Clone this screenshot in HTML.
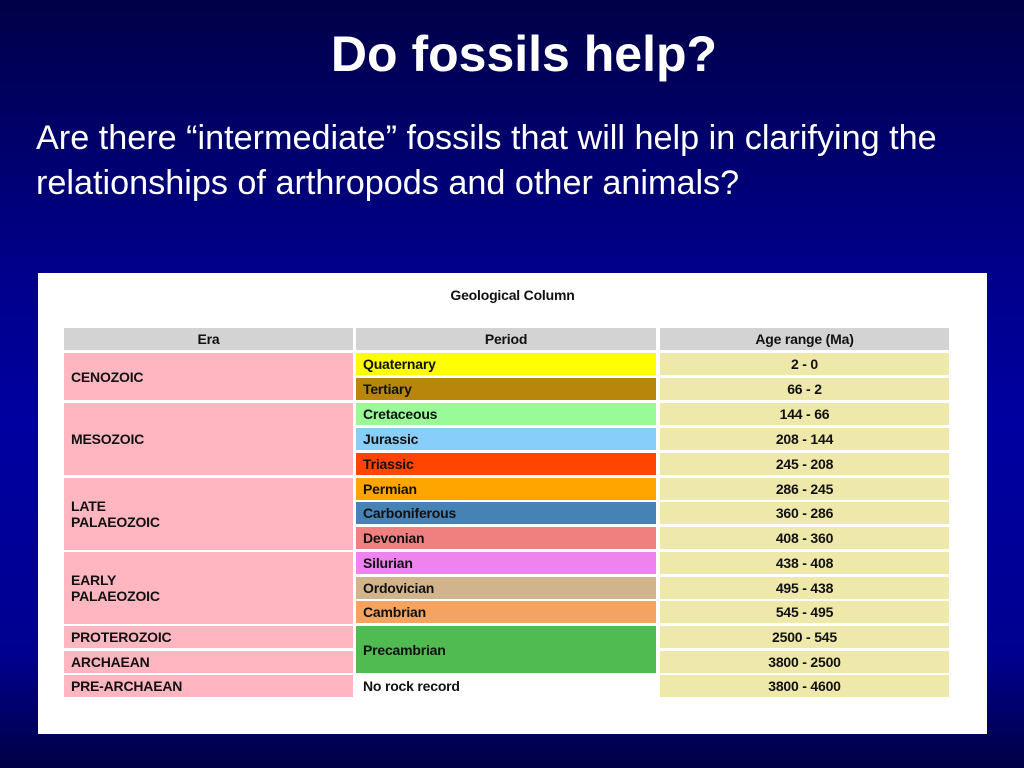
<!DOCTYPE html>
<html><head><meta charset="utf-8"><style>
body{margin:0;width:1024px;height:768px;overflow:hidden;font-family:"Liberation Sans",Arial,sans-serif;
background:linear-gradient(#000048 0%,#00008a 35%,#0000a0 55%,#000090 85%,#000045 100%);position:relative}
h1{position:absolute;top:24px;left:12px;width:1024px;text-align:center;margin:0;color:#fff;font-size:50px;font-weight:bold;line-height:60px}
.p{position:absolute;left:36px;top:116px;color:#fff;font-size:34.2px;line-height:45px;margin:0;width:930px}
.box{position:absolute;left:38px;top:273px;width:949px;height:461px;background:#fff}
.c{position:absolute;font-size:14px;font-weight:bold;color:#111;display:flex;align-items:center;box-sizing:border-box;padding-left:7px;letter-spacing:-0.2px}
.ctr{justify-content:center;padding-left:0}
</style></head><body>
<h1>Do fossils help?</h1>
<p class="p">Are there “intermediate” fossils that will help in clarifying the relationships of arthropods and other animals?</p>
<div class="box"></div>
<div class="c ctr" style="left:38px;width:949px;top:285px;height:20px">Geological Column</div>
<div class="c ctr" style="left:64px;width:289px;top:328px;height:22px;background:#d3d3d3">Era</div>
<div class="c ctr" style="left:356px;width:300px;top:328px;height:22px;background:#d3d3d3">Period</div>
<div class="c ctr" style="left:660px;width:289px;top:328px;height:22px;background:#d3d3d3">Age range (Ma)</div>

<div class="c" style="left:64px;width:289px;top:353px;height:47px;background:#ffb6c1">CENOZOIC</div>
<div class="c" style="left:64px;width:289px;top:403px;height:72px;background:#ffb6c1">MESOZOIC</div>
<div class="c" style="left:64px;width:289px;top:478px;height:72px;background:#ffb6c1">LATE<br>PALAEOZOIC</div>
<div class="c" style="left:64px;width:289px;top:552px;height:72px;background:#ffb6c1">EARLY<br>PALAEOZOIC</div>
<div class="c" style="left:64px;width:289px;top:626px;height:22px;background:#ffb6c1">PROTEROZOIC</div>
<div class="c" style="left:64px;width:289px;top:651px;height:22px;background:#ffb6c1">ARCHAEAN</div>
<div class="c" style="left:64px;width:289px;top:675px;height:22px;background:#ffb6c1">PRE-ARCHAEAN</div>

<div class="c" style="left:356px;width:300px;top:353px;height:22px;background:#ffff00">Quaternary</div>
<div class="c" style="left:356px;width:300px;top:378px;height:22px;background:#b8860b">Tertiary</div>
<div class="c" style="left:356px;width:300px;top:403px;height:22px;background:#98fb98">Cretaceous</div>
<div class="c" style="left:356px;width:300px;top:428px;height:22px;background:#87cefa">Jurassic</div>
<div class="c" style="left:356px;width:300px;top:453px;height:22px;background:#ff4500">Triassic</div>
<div class="c" style="left:356px;width:300px;top:478px;height:22px;background:#ffa500">Permian</div>
<div class="c" style="left:356px;width:300px;top:502px;height:22px;background:#4682b4">Carboniferous</div>
<div class="c" style="left:356px;width:300px;top:527px;height:22px;background:#f08080">Devonian</div>
<div class="c" style="left:356px;width:300px;top:552px;height:22px;background:#ee82ee">Silurian</div>
<div class="c" style="left:356px;width:300px;top:577px;height:22px;background:#d2b48c">Ordovician</div>
<div class="c" style="left:356px;width:300px;top:601px;height:22px;background:#f4a460">Cambrian</div>
<div class="c" style="left:356px;width:300px;top:626px;height:47px;background:#4fbb50">Precambrian</div>
<div class="c" style="left:356px;width:300px;top:675px;height:22px;background:#fff">No rock record</div>

<div class="c ctr" style="left:660px;width:289px;top:353px;height:22px;background:#eee8aa">2 - 0</div>
<div class="c ctr" style="left:660px;width:289px;top:378px;height:22px;background:#eee8aa">66 - 2</div>
<div class="c ctr" style="left:660px;width:289px;top:403px;height:22px;background:#eee8aa">144 - 66</div>
<div class="c ctr" style="left:660px;width:289px;top:428px;height:22px;background:#eee8aa">208 - 144</div>
<div class="c ctr" style="left:660px;width:289px;top:453px;height:22px;background:#eee8aa">245 - 208</div>
<div class="c ctr" style="left:660px;width:289px;top:478px;height:22px;background:#eee8aa">286 - 245</div>
<div class="c ctr" style="left:660px;width:289px;top:502px;height:22px;background:#eee8aa">360 - 286</div>
<div class="c ctr" style="left:660px;width:289px;top:527px;height:22px;background:#eee8aa">408 - 360</div>
<div class="c ctr" style="left:660px;width:289px;top:552px;height:22px;background:#eee8aa">438 - 408</div>
<div class="c ctr" style="left:660px;width:289px;top:577px;height:22px;background:#eee8aa">495 - 438</div>
<div class="c ctr" style="left:660px;width:289px;top:601px;height:22px;background:#eee8aa">545 - 495</div>
<div class="c ctr" style="left:660px;width:289px;top:626px;height:22px;background:#eee8aa">2500 - 545</div>
<div class="c ctr" style="left:660px;width:289px;top:651px;height:22px;background:#eee8aa">3800 - 2500</div>
<div class="c ctr" style="left:660px;width:289px;top:675px;height:22px;background:#eee8aa">3800 - 4600</div>
</body></html>
